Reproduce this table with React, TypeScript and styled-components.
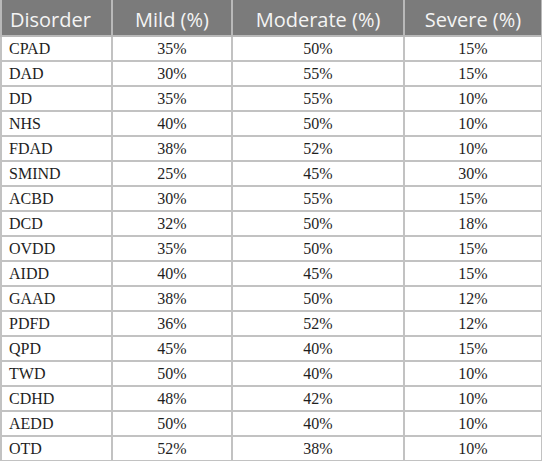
import styled, { createGlobalStyle } from 'styled-components';

interface Row {
  name: string;
  mild: number;
  moderate: number;
  severe: number;
}

const rows: Row[] = [
  { name: 'CPAD', mild: 35, moderate: 50, severe: 15 },
  { name: 'DAD', mild: 30, moderate: 55, severe: 15 },
  { name: 'DD', mild: 35, moderate: 55, severe: 10 },
  { name: 'NHS', mild: 40, moderate: 50, severe: 10 },
  { name: 'FDAD', mild: 38, moderate: 52, severe: 10 },
  { name: 'SMIND', mild: 25, moderate: 45, severe: 30 },
  { name: 'ACBD', mild: 30, moderate: 55, severe: 15 },
  { name: 'DCD', mild: 32, moderate: 50, severe: 18 },
  { name: 'OVDD', mild: 35, moderate: 50, severe: 15 },
  { name: 'AIDD', mild: 40, moderate: 45, severe: 15 },
  { name: 'GAAD', mild: 38, moderate: 50, severe: 12 },
  { name: 'PDFD', mild: 36, moderate: 52, severe: 12 },
  { name: 'QPD', mild: 45, moderate: 40, severe: 15 },
  { name: 'TWD', mild: 50, moderate: 40, severe: 10 },
  { name: 'CDHD', mild: 48, moderate: 42, severe: 10 },
  { name: 'AEDD', mild: 50, moderate: 40, severe: 10 },
  { name: 'OTD', mild: 52, moderate: 38, severe: 10 },
];

const GlobalStyle = createGlobalStyle`
  html, body {
    margin: 0;
    padding: 0;
    background: #ffffff;
  }
`;

const Table = styled.table`
  border-collapse: collapse;
  width: 541px;
  table-layout: fixed;
  margin: 0;
`;

const HeadCell = styled.th<{ $left?: boolean }>`
  height: 36px;
  padding: 3px ${({ $left }) => ($left ? '8px' : '0')} 0;
  background: #7b7b7b;
  color: #f4f4f4;
  font-family: 'Open Sans', 'Noto Sans', sans-serif;
  font-weight: 400;
  font-size: 20px;
  text-align: ${({ $left }) => ($left ? 'left' : 'center')};
  border: 2px solid #b9b9b9;
  border-top: none;
  box-sizing: border-box;
`;

const Cell = styled.td<{ $left?: boolean }>`
  height: 25px;
  padding: 1px ${({ $left }) => ($left ? '7px' : '0')} 0;
  font-family: 'Liberation Serif', 'Times New Roman', serif;
  font-size: 16px;
  color: #1e1e1e;
  text-align: ${({ $left }) => ($left ? 'left' : 'center')};
  border: 2px solid #c2c2c2;
  box-sizing: border-box;
`;

export default function App() {
  return (
    <>
      <GlobalStyle />
      <Table>
        <colgroup>
          <col style={{ width: 111 }} />
          <col style={{ width: 120 }} />
          <col style={{ width: 172 }} />
          <col style={{ width: 138 }} />
        </colgroup>
        <thead>
          <tr>
            <HeadCell $left>Disorder</HeadCell>
            <HeadCell>Mild (%)</HeadCell>
            <HeadCell>Moderate (%)</HeadCell>
            <HeadCell>Severe (%)</HeadCell>
          </tr>
        </thead>
        <tbody>
          {rows.map((r) => (
            <tr key={r.name}>
              <Cell $left>{r.name}</Cell>
              <Cell>{r.mild}%</Cell>
              <Cell>{r.moderate}%</Cell>
              <Cell>{r.severe}%</Cell>
            </tr>
          ))}
        </tbody>
      </Table>
    </>
  );
}
